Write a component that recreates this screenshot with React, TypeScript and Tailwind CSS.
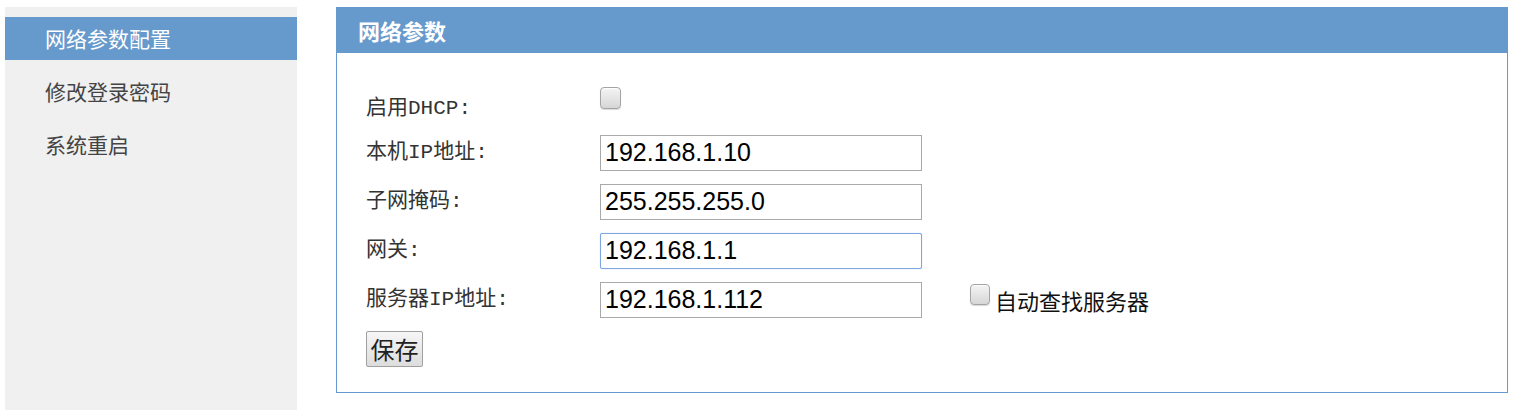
import React, { useState } from "react";

const cjk = "font-['Noto_Sans_CJK_SC',sans-serif]";
const labelFont = "font-['Liberation_Mono','Noto_Sans_CJK_SC',monospace]";

const menu = ["网络参数配置", "修改登录密码", "系统重启"];

const Box: React.FC<{ className?: string }> = ({ className = "" }) => (
	<input
		type="checkbox"
		className={
			"appearance-none shrink-0 rounded-[4px] border border-[#a3a3a3] bg-gradient-to-b from-[#f4f4f4] to-[#d6d6d6] shadow-[inset_0_1px_1px_rgba(255,255,255,0.9),0_1px_1px_rgba(0,0,0,0.15)] " +
			className
		}
	/>
);

const Field: React.FC<{ value: string; focused?: boolean }> = ({ value, focused }) => (
	<input
		type="text"
		defaultValue={value}
		className={
			"w-[322px] h-[36px] px-[4px] bg-white text-black text-[25px] font-['Liberation_Sans',Arial,sans-serif] outline-none " +
			(focused
				? "border border-[#7ea6e0] rounded-[2px] shadow-[0_0_1px_#9cc0ef]"
				: "border border-[#a9a9a9]")
		}
	/>
);

const Row: React.FC<{ label: React.ReactNode; children: React.ReactNode }> = ({ label, children }) => (
	<div className="flex items-center h-[36px]">
		<div className={`w-[234px] shrink-0 text-[21px] text-[#333] ${labelFont}`}>{label}</div>
		{children}
	</div>
);

export default function App() {
	const [active, setActive] = useState(0);

	return (
		<div className="flex items-stretch bg-white min-h-[410px] pt-[7px] pl-[5px] pr-[6px]">
			{/* left menu */}
			<div className={`w-[292px] shrink-0 bg-[#f0f0f0] pt-[10px] flex flex-col gap-[10px] ${cjk}`}>
				{menu.map((m, i) => (
					<div
						key={m}
						onClick={() => setActive(i)}
						className={
							"h-[43px] flex items-center pl-[40px] text-[21px] cursor-pointer " +
							(i === active ? "bg-[#6699cc] text-white" : "text-[#444]")
						}
					>
						{m}
					</div>
				))}
			</div>

			{/* main panel */}
			<div className="ml-[39px] flex-1 self-start border border-[#6699cc]">
				<div className={`h-[46px] -m-px mb-0 bg-[#6699cc] flex items-center pl-[22px] text-white text-[22px] font-bold ${cjk}`}>
					网络参数
				</div>
				<div className="pt-[33px] pb-[25px] pl-[29px] flex flex-col gap-[13px]">
					<div className="flex items-start h-[36px]">
						<div className={`w-[234px] shrink-0 pt-[7px] text-[21px] text-[#333] ${labelFont}`}>启用DHCP:</div>
						<Box className="w-[21px] h-[22px] mt-[1px]" />
					</div>
					<Row label="本机IP地址:">
						<Field value="192.168.1.10" />
					</Row>
					<Row label="子网掩码:">
						<Field value="255.255.255.0" />
					</Row>
					<Row label="网关:">
						<Field value="192.168.1.1" focused />
					</Row>
					<div className="flex items-start h-[36px]">
						<div className={`w-[234px] shrink-0 h-[36px] flex items-center text-[21px] text-[#333] ${labelFont}`}>
							服务器IP地址:
						</div>
						<Field value="192.168.1.112" />
						<div className="ml-[48px] flex items-start">
							<Box className="w-[20px] h-[21px] mt-[2px]" />
							<span className={`ml-[5px] mt-[5px] leading-[26px] text-[22px] text-[#111] ${cjk}`}>自动查找服务器</span>
						</div>
					</div>
					<div>
						<button
							type="button"
							className={`h-[36px] w-[57px] border border-[#a0a0a0] rounded-[2px] bg-gradient-to-b from-[#f6f6f6] to-[#dddddd] text-[24px] leading-none text-[#222] ${cjk}`}
						>
							保存
						</button>
					</div>
				</div>
			</div>
		</div>
	);
}
